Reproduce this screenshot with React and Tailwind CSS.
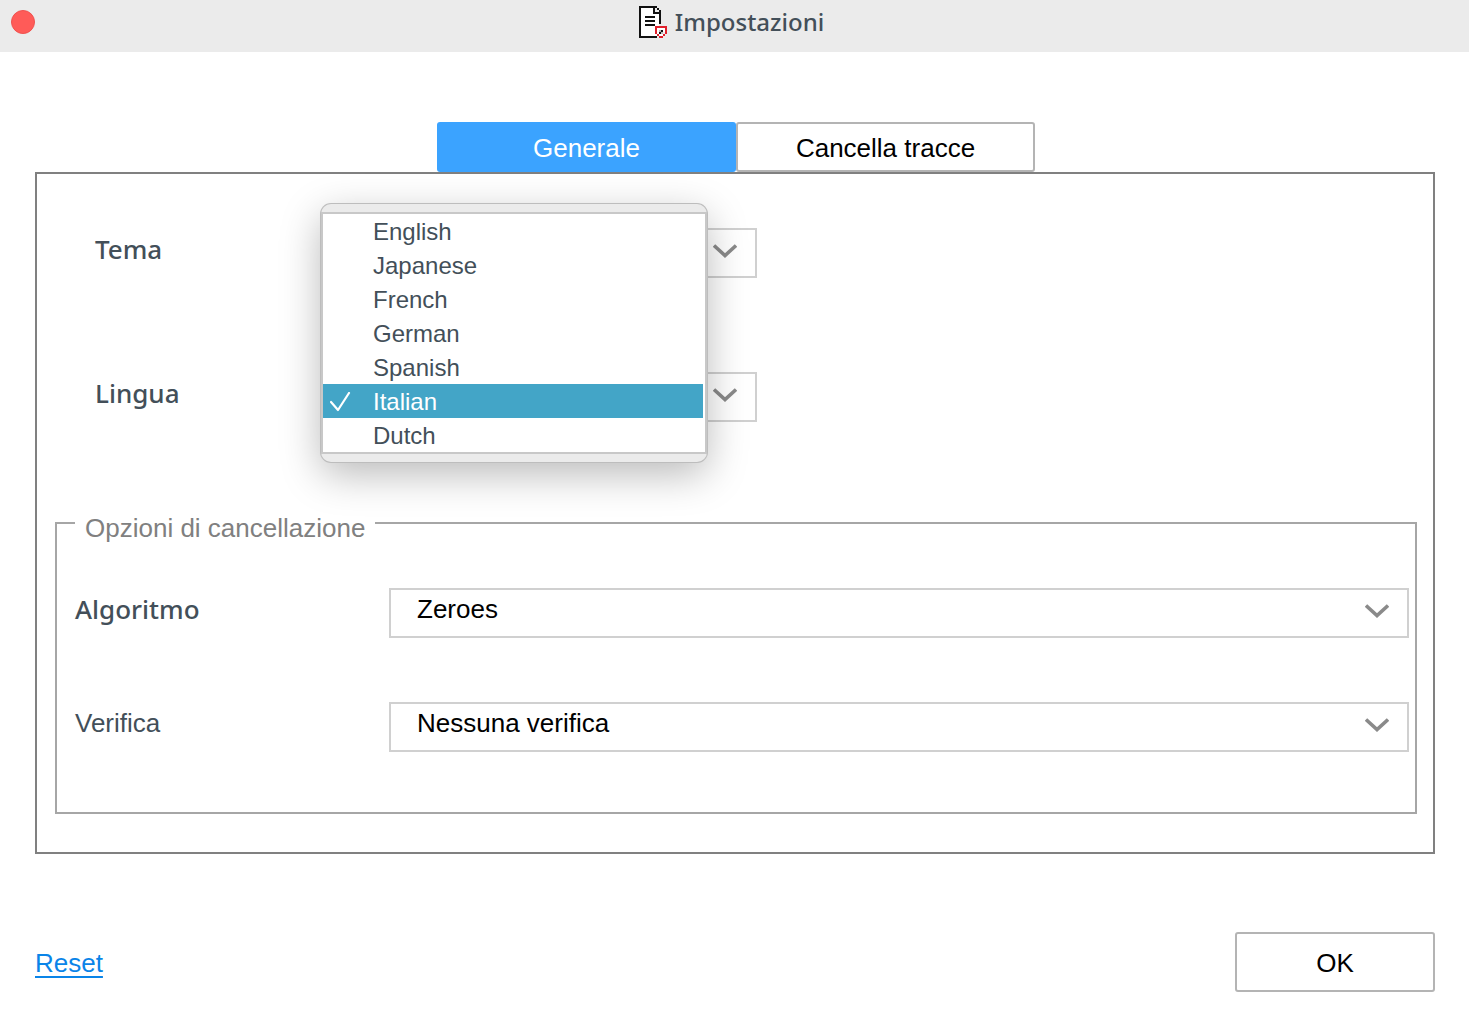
import React, { useState } from 'react';

const LANGUAGES = ['English', 'Japanese', 'French', 'German', 'Spanish', 'Italian', 'Dutch'];

const Chevron = () => (
  <svg className="absolute right-5 top-4 pointer-events-none" width="24" height="14" viewBox="0 0 24 14" fill="none">
    <path d="M1 1.5L12 11.5L23 1.5" stroke="#8a8a8a" strokeWidth="3.6" />
  </svg>
);

const DocumentIcon = () => (
  <svg width="28" height="32" viewBox="0 0 14 16" shapeRendering="crispEdges">
    <path fill="#fff" d="M1 1H8V3H10V15H1Z" />
    <path fill="#111" d="M0 0H9V1H1V15H9V16H0ZM7 1H8V3H10V4H7ZM9 1H10V2H9ZM10 2H11V9H10ZM3 5H8V6H3ZM3 7H8V8H3ZM3 9H8V10H3Z" />
    <path fill="#fff" d="M9 11H13V13H12V15H10V13H9Z" />
    <path fill="#e0202c" d="M8 10H14V14H13V11H9V14H8ZM9 14H10V15H9ZM12 14H13V15H12ZM10 15H12V16H10Z" />
    <path fill="#111" d="M11 12H12V13H11ZM10 13H11V14H10Z" />
    <path fill="#bbb" d="M10 12H11V13H10ZM11 13H12V14H11Z" />
  </svg>
);

const SelectBox = ({ id, value, options, onChange }) => (
  <div className="relative">
    <select
      id={id}
      value={value}
      onChange={onChange}
      className="block w-full h-[50px] appearance-none border-2 border-[#d0d0d0] bg-white pl-[26px] pr-14 pb-2 text-[26px] leading-8 text-black"
    >
      {options.map((option) => (
        <option key={option} value={option}>{option}</option>
      ))}
    </select>
    <Chevron />
  </div>
);

const LanguageMenu = ({ selected, onSelect }) => (
  <div className="absolute -left-1 -top-[168px] z-10 w-[386px] rounded-[10px] bg-[#ebebeb] py-2 shadow-[0_0_0_1px_#bdbdbd,0_12px_40px_rgba(0,0,0,0.28)]">
    <ul role="listbox" aria-label="Lingua" className="border-2 border-[#c8c8c8] bg-white pr-[2px]">
      {LANGUAGES.map((language) => (
        <li
          key={language}
          role="option"
          aria-selected={language === selected}
          onClick={() => onSelect(language)}
          className={
            language === selected
              ? 'flex h-[34px] items-center bg-[#43a5c7] pt-[2px] text-2xl text-white'
              : 'flex h-[34px] items-center pt-[2px] text-2xl text-[#434f59]'
          }
        >
          <span className="w-[50px] shrink-0 pl-[7px]">
            {language === selected && (
              <svg width="21" height="20" viewBox="0 0 21 20" fill="none">
                <path d="M1 10L8 18L19 1" stroke="#fff" strokeWidth="2.2" strokeLinecap="round" strokeLinejoin="round" />
              </svg>
            )}
          </span>
          {language}
        </li>
      ))}
    </ul>
  </div>
);

const App = () => {
  const [tab, setTab] = useState('generale');
  const [theme, setTheme] = useState('');
  const [language, setLanguage] = useState('Italian');
  const [algorithm, setAlgorithm] = useState('Zeroes');
  const [verify, setVerify] = useState('Nessuna verifica');

  const activeTab = 'w-[299px] rounded-[3px] bg-[#3ba3ff] pt-[2px] text-white';
  const idleTab = 'w-[299px] rounded-[3px] border-2 border-[#b4b4b4] bg-white pt-[2px] text-black';

  return (
    <div className="min-h-screen bg-white font-['Liberation_Sans',Arial,sans-serif] text-[26px] leading-8 text-[#434f59]">
      <header className="grid h-[52px] grid-cols-[1fr_auto_1fr] bg-[#ebebeb] pr-[6px]">
        <button
          aria-label="Chiudi"
          className="ml-[11px] mt-[10px] size-6 rounded-full border border-[#f0524f] bg-[#ff5b58]"
        />
        <h1 className="flex h-11 items-center gap-2 font-['Noto_Sans',sans-serif] text-2xl font-medium">
          <DocumentIcon />
          Impostazioni
        </h1>
      </header>

      <main className="pl-[35px] pr-[34px] pt-[70px]">
        <div role="tablist" className="flex h-[50px] justify-center pl-[2px]">
          <button
            role="tab"
            aria-selected={tab === 'generale'}
            onClick={() => setTab('generale')}
            className={tab === 'generale' ? activeTab : idleTab}
          >
            Generale
          </button>
          <button
            role="tab"
            aria-selected={tab === 'tracce'}
            onClick={() => setTab('tracce')}
            className={tab === 'tracce' ? activeTab : idleTab}
          >
            Cancella tracce
          </button>
        </div>

        <section className="border-2 border-[#808080] pb-[38px] pl-[18px] pr-4 pt-[54px]">
          <div className="grid grid-cols-[230px_432px] gap-y-[94px] pl-10">
            <label htmlFor="theme" className="pt-[5px] font-['Noto_Sans',sans-serif] font-medium">Tema</label>
            <SelectBox id="theme" value={theme} options={['']} onChange={(e) => setTheme(e.target.value)} />

            <label htmlFor="language" className="pt-[5px] font-['Noto_Sans',sans-serif] font-medium">Lingua</label>
            <div className="relative">
              <SelectBox id="language" value={language} options={LANGUAGES} onChange={(e) => setLanguage(e.target.value)} />
              <LanguageMenu selected={language} onSelect={setLanguage} />
            </div>
          </div>

          <fieldset className="mt-[84px] border-2 border-[#a6a6a6] pb-[60px] pl-[18px] pr-[6px]">
            <legend className="px-[10px] pt-[10px] leading-6 text-[#808080]">Opzioni di cancellazione</legend>
            <div className="grid grid-cols-[314px_1fr] gap-y-16 pt-12">
              <label htmlFor="algorithm" className="pt-[5px] font-['Noto_Sans',sans-serif] font-medium">Algoritmo</label>
              <SelectBox
                id="algorithm"
                value={algorithm}
                options={['Zeroes']}
                onChange={(e) => setAlgorithm(e.target.value)}
              />

              <label htmlFor="verify" className="pt-[5px]">Verifica</label>
              <SelectBox
                id="verify"
                value={verify}
                options={['Nessuna verifica']}
                onChange={(e) => setVerify(e.target.value)}
              />
            </div>
          </fieldset>
        </section>

        <footer className="mt-[78px] flex items-center justify-between">
          <a href="#reset" className="pt-[2px] text-[#0a84e8] underline decoration-2 underline-offset-4">Reset</a>
          <button className="h-[60px] w-[200px] rounded-[3px] border-2 border-[#b4b4b4] bg-white pt-[2px] text-black">OK</button>
        </footer>
      </main>
    </div>
  );
};

export default App;
